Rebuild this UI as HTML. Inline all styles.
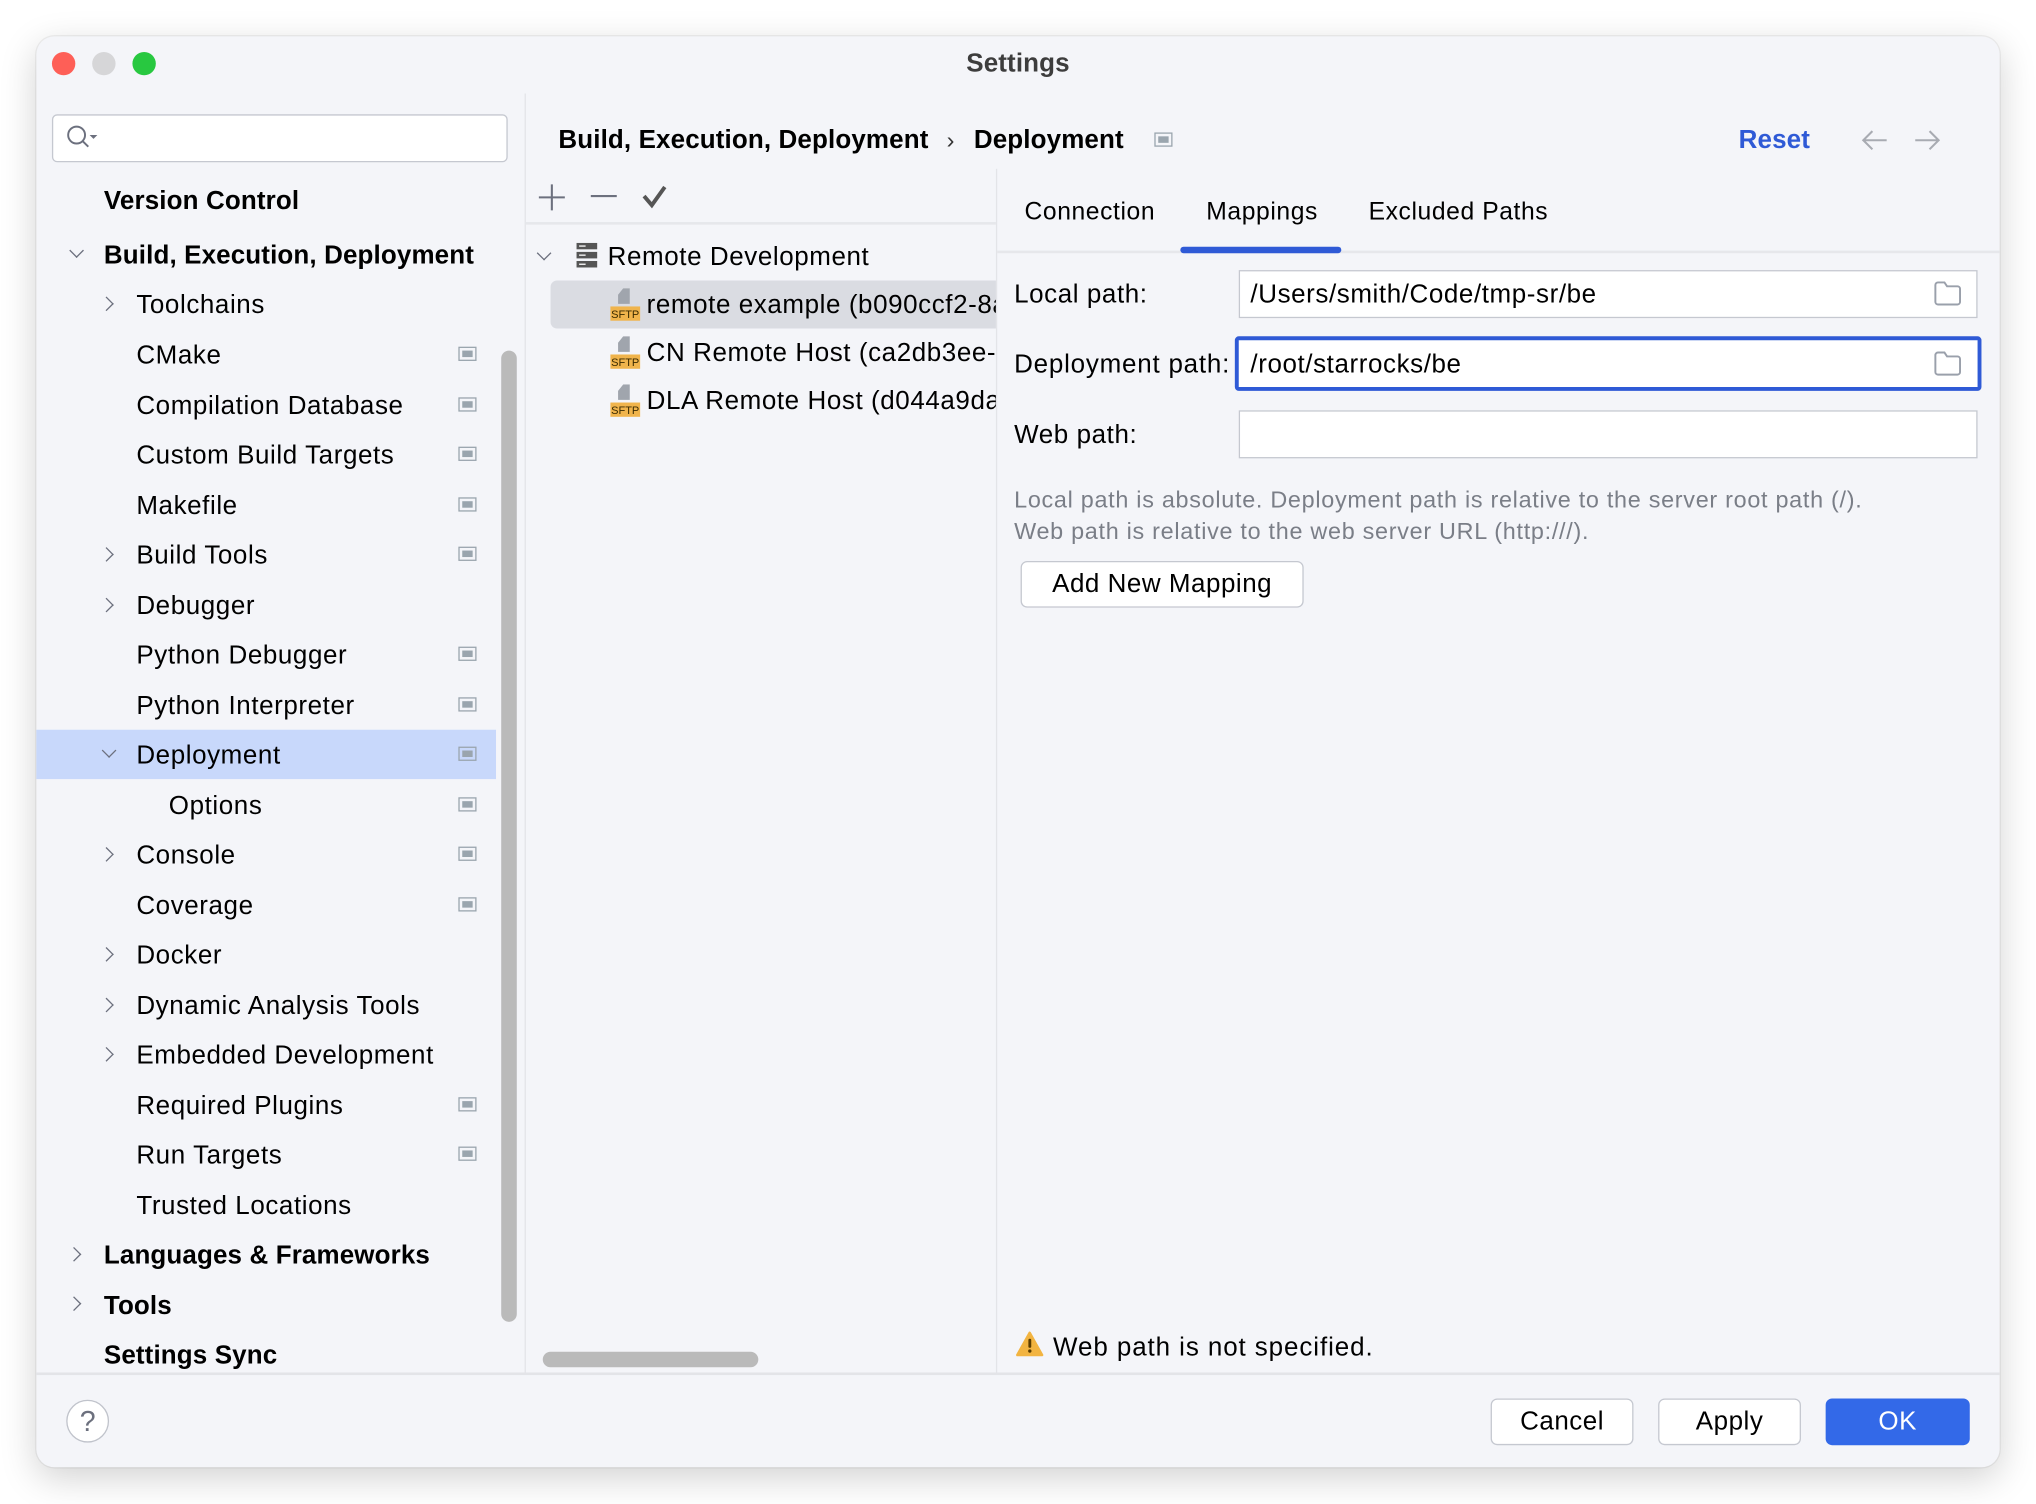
<!DOCTYPE html>
<html><head><meta charset="utf-8"><style>
html,body{margin:0;padding:0;background:#fff;width:2036px;height:1504px;overflow:hidden}
#s{position:absolute;left:0;top:0;width:1568px;height:1158px;transform:scale(1.29847);transform-origin:0 0;font-family:"Liberation Sans",sans-serif;color:#000}
.win{position:absolute;left:28px;top:28px;width:1512px;height:1102px;background:#f4f5f9;border-radius:14px;box-shadow:0 8px 28px rgba(0,0,0,.18),0 0 0 1px rgba(0,0,0,.06);overflow:hidden}
.t{position:absolute;white-space:nowrap;font-size:20px;line-height:24px;letter-spacing:0.45px;margin-top:1px}
.b{font-weight:bold;letter-spacing:0.1px}
.ic{position:absolute;width:12px;height:9px;border:1.5px solid #9aa5ae;background:#f4f5f9}
.ic::after{content:"";position:absolute;left:2px;top:2px;width:8px;height:5px;background:#9aa5ae}
.chev{position:absolute;width:7px;height:7px;border-right:1.5px solid #6c707e;border-bottom:1.5px solid #6c707e}
.r{transform:rotate(-45deg)}
.d{transform:rotate(45deg)}
.inp{position:absolute;background:#fff;border:1.5px solid #c5c8d0;box-sizing:border-box}
.btn{position:absolute;background:#fff;border:1.5px solid #c5c8d0;border-radius:5px;box-sizing:border-box;text-align:center;font-size:20px;line-height:35px;letter-spacing:0.4px}
.sftp{position:absolute;width:24px;height:26px}
</style></head><body><div id="s">
<div class="win"></div>
<div style="position:absolute;left:40px;top:40px;width:18px;height:18px;border-radius:50%;background:#fe5f57"></div>
<div style="position:absolute;left:71px;top:40px;width:18px;height:18px;border-radius:50%;background:#d6d6d8"></div>
<div style="position:absolute;left:102px;top:40px;width:18px;height:18px;border-radius:50%;background:#28c840"></div>
<div class="t b" style="left:0;width:1568px;text-align:center;top:36px;color:#3d3d3d;font-size:20px">Settings</div>

<div class="inp" style="left:40px;top:88px;width:351px;height:37px;border-radius:4px"></div>
<svg style="position:absolute;left:50px;top:95px" width="28" height="22" viewBox="0 0 28 22"><circle cx="9" cy="9" r="6.5" fill="none" stroke="#6c707e" stroke-width="1.5"/><line x1="13.5" y1="13.5" x2="18" y2="18" stroke="#6c707e" stroke-width="1.5"/><path d="M19 9h6l-3 3z" fill="#6c707e"/></svg>

<div class="t b" style="left:80px;top:142px">Version Control</div>
<div class="chev d" style="left:55px;top:189px"></div>
<div class="t b" style="left:80px;top:184px">Build, Execution, Deployment</div>
<div class="chev r" style="left:78px;top:230px"></div>
<div class="t" style="left:105px;top:222px">Toolchains</div>
<div class="t" style="left:105px;top:261px">CMake</div><div class="ic" style="left:353px;top:267px"></div>
<div class="t" style="left:105px;top:300px">Compilation Database</div><div class="ic" style="left:353px;top:306px"></div>
<div class="t" style="left:105px;top:338px">Custom Build Targets</div><div class="ic" style="left:353px;top:344px"></div>
<div class="t" style="left:105px;top:377px">Makefile</div><div class="ic" style="left:353px;top:383px"></div>
<div class="chev r" style="left:78px;top:423px"></div>
<div class="t" style="left:105px;top:415px">Build Tools</div><div class="ic" style="left:353px;top:421px"></div>
<div class="chev r" style="left:78px;top:462px"></div>
<div class="t" style="left:105px;top:454px">Debugger</div>
<div class="t" style="left:105px;top:492px">Python Debugger</div><div class="ic" style="left:353px;top:498px"></div>
<div class="t" style="left:105px;top:531px">Python Interpreter</div><div class="ic" style="left:353px;top:537px"></div>
<div style="position:absolute;left:28px;top:562px;width:354px;height:38px;background:#c8d8fb"></div>
<div class="chev d" style="left:80px;top:574px"></div>
<div class="t" style="left:105px;top:569px">Deployment</div><div class="ic" style="left:353px;top:575px;background:#c8d8fb"></div>
<div class="t" style="left:130px;top:608px">Options</div><div class="ic" style="left:353px;top:614px"></div>
<div class="chev r" style="left:78px;top:654px"></div>
<div class="t" style="left:105px;top:646px">Console</div><div class="ic" style="left:353px;top:652px"></div>
<div class="t" style="left:105px;top:685px">Coverage</div><div class="ic" style="left:353px;top:691px"></div>
<div class="chev r" style="left:78px;top:731px"></div>
<div class="t" style="left:105px;top:723px">Docker</div>
<div class="chev r" style="left:78px;top:770px"></div>
<div class="t" style="left:105px;top:762px">Dynamic Analysis Tools</div>
<div class="chev r" style="left:78px;top:808px"></div>
<div class="t" style="left:105px;top:800px">Embedded Development</div>
<div class="t" style="left:105px;top:839px">Required Plugins</div><div class="ic" style="left:353px;top:845px"></div>
<div class="t" style="left:105px;top:877px">Run Targets</div><div class="ic" style="left:353px;top:883px"></div>
<div class="t" style="left:105px;top:916px">Trusted Locations</div>
<div class="chev r" style="left:53px;top:962px"></div>
<div class="t b" style="left:80px;top:954px">Languages &amp; Frameworks</div>
<div class="chev r" style="left:53px;top:1000px"></div>
<div class="t b" style="left:80px;top:993px">Tools</div>
<div class="t b" style="left:80px;top:1031px">Settings Sync</div>
<div style="position:absolute;left:386px;top:270px;width:12px;height:748px;border-radius:6px;background:#bababa"></div>
<div style="position:absolute;left:404px;top:72px;width:1px;height:986px;background:#e3e4e8"></div>

<div class="t b" style="left:430px;top:95px">Build, Execution, Deployment</div>
<div class="t" style="left:729px;top:95px;color:#333;font-size:18px">›</div>
<div class="t b" style="left:750px;top:95px">Deployment</div>
<div class="ic" style="left:889px;top:102px"></div>
<div class="t b" style="left:1339px;top:95px;color:#2f5ad6">Reset</div>
<svg style="position:absolute;left:1433px;top:98px" width="64" height="20" viewBox="0 0 64 20"><path d="M2 10h18M9 3l-7 7 7 7" fill="none" stroke="#a8abb2" stroke-width="1.6"/><path d="M42 10h18M53 3l7 7-7 7" fill="none" stroke="#a8abb2" stroke-width="1.6"/></svg>

<svg style="position:absolute;left:413px;top:140px" width="110" height="24" viewBox="0 0 110 24"><path d="M12 2v20M2 12h20" stroke="#6c707e" stroke-width="1.6"/><path d="M42 11h20" stroke="#6c707e" stroke-width="1.6"/><path d="M83 11l6 7 10-14" fill="none" stroke="#555" stroke-width="3"/></svg>
<div style="position:absolute;left:405px;top:171px;width:362px;height:2px;background:#e6e7eb"></div>
<div class="chev d" style="left:415px;top:191px"></div>
<svg style="position:absolute;left:444px;top:187px" width="16" height="19" viewBox="0 0 16 19"><rect x="0" y="0" width="16" height="5" fill="#555"/><rect x="0" y="7" width="16" height="5" fill="#555"/><rect x="0" y="14" width="16" height="5" fill="#555"/><rect x="2" y="2" width="5" height="1" fill="#fff"/><rect x="2" y="9" width="5" height="1" fill="#fff"/><rect x="2" y="16" width="5" height="1" fill="#fff"/></svg>
<div class="t" style="left:468px;top:185px">Remote Development</div>
<div style="position:absolute;left:424px;top:216px;width:343px;height:37px;background:#dadce2;border-radius:5px 0 0 5px"></div>
<div style="position:absolute;left:405px;top:200px;width:362px;height:130px;overflow:hidden">
<div class="t" style="left:93px;top:22px">remote example (b090ccf2-8a1b</div>
<div class="t" style="left:93px;top:59px">CN Remote Host (ca2db3ee-1c2d</div>
<div class="t" style="left:93px;top:96px">DLA Remote Host (d044a9da-3e</div>
</div>
<svg class="sftp" style="left:470px;top:222px" viewBox="0 0 24 26"><path d="M10 0h5v12H6V5z" fill="#a0a5ad"/><rect x="0" y="14" width="23" height="11" fill="#f0b44c"/><text x="11.5" y="23" font-size="8.5" font-family="Liberation Sans" text-anchor="middle" fill="#3a2a00">SFTP</text></svg>
<svg class="sftp" style="left:470px;top:259px" viewBox="0 0 24 26"><path d="M10 0h5v12H6V5z" fill="#a0a5ad"/><rect x="0" y="14" width="23" height="11" fill="#f0b44c"/><text x="11.5" y="23" font-size="8.5" font-family="Liberation Sans" text-anchor="middle" fill="#3a2a00">SFTP</text></svg>
<svg class="sftp" style="left:470px;top:296px" viewBox="0 0 24 26"><path d="M10 0h5v12H6V5z" fill="#a0a5ad"/><rect x="0" y="14" width="23" height="11" fill="#f0b44c"/><text x="11.5" y="23" font-size="8.5" font-family="Liberation Sans" text-anchor="middle" fill="#3a2a00">SFTP</text></svg>
<div style="position:absolute;left:418px;top:1041px;width:166px;height:12px;border-radius:6px;background:#bababa"></div>
<div style="position:absolute;left:767px;top:130px;width:1px;height:928px;background:#e3e4e8"></div>

<div class="t" style="left:789px;top:151px;font-size:19px">Connection</div>
<div class="t" style="left:929px;top:151px;font-size:19px">Mappings</div>
<div class="t" style="left:1054px;top:151px;font-size:19px">Excluded Paths</div>
<div style="position:absolute;left:768px;top:193px;width:772px;height:2px;background:#e6e7eb"></div>
<div style="position:absolute;left:909px;top:190px;width:124px;height:5px;border-radius:3px;background:#2f5ad6"></div>

<div class="t" style="left:781px;top:214px">Local path:</div>
<div class="inp" style="left:954px;top:208px;width:569px;height:37px"></div>
<div class="t" style="left:963px;top:214px">/Users/smith/Code/tmp-sr/be</div>
<div class="t" style="left:781px;top:268px;letter-spacing:0.6px">Deployment path:</div>
<div class="inp" style="left:951px;top:259px;width:575px;height:42px;border:3px solid #2f5ad6;border-radius:3px"></div>
<div class="t" style="left:963px;top:268px">/root/starrocks/be</div>
<div class="t" style="left:781px;top:322px">Web path:</div>
<div class="inp" style="left:954px;top:316px;width:569px;height:37px"></div>
<svg style="position:absolute;left:1489px;top:216px" width="22" height="20" viewBox="0 0 22 20"><path d="M1.5 3.5a2 2 0 0 1 2-2h5l2 3h8a2 2 0 0 1 2 2v10a2 2 0 0 1-2 2h-15a2 2 0 0 1-2-2z" fill="none" stroke="#9aa0ab" stroke-width="1.5"/></svg>
<svg style="position:absolute;left:1489px;top:270px" width="22" height="20" viewBox="0 0 22 20"><path d="M1.5 3.5a2 2 0 0 1 2-2h5l2 3h8a2 2 0 0 1 2 2v10a2 2 0 0 1-2 2h-15a2 2 0 0 1-2-2z" fill="none" stroke="#9aa0ab" stroke-width="1.5"/></svg>
<div class="t" style="left:781px;top:372px;color:#7a7e87;font-size:18px;letter-spacing:0.55px">Local path is absolute. Deployment path is relative to the server root path (/).</div>
<div class="t" style="left:781px;top:396px;color:#7a7e87;font-size:18px;letter-spacing:0.55px">Web path is relative to the web server URL (http:///).</div>
<div class="btn" style="left:786px;top:432px;width:218px;height:36px">Add New Mapping</div>

<svg style="position:absolute;left:782px;top:1025px" width="22" height="20" viewBox="0 0 22 20"><path d="M11 1.5L20.5 18.5H1.5z" fill="#f2b441" stroke="#f2b441" stroke-width="2" stroke-linejoin="round"/><rect x="10" y="6" width="2.2" height="7" rx="1" fill="#5a3c00"/><circle cx="11.1" cy="15.5" r="1.3" fill="#5a3c00"/></svg>
<div class="t" style="left:811px;top:1025px;letter-spacing:0.7px">Web path is not specified.</div>

<div style="position:absolute;left:28px;top:1057px;width:1512px;height:2px;background:#e3e4e8"></div>
<div style="position:absolute;left:51px;top:1078px;width:31px;height:31px;border-radius:50%;border:1.5px solid #c0c3cb;background:#fff;text-align:center;font-size:22px;line-height:31px;color:#6c707e">?</div>
<div class="btn" style="left:1148px;top:1077px;width:110px;height:36px">Cancel</div>
<div class="btn" style="left:1277px;top:1077px;width:110px;height:36px">Apply</div>
<div class="btn" style="left:1406px;top:1077px;width:111px;height:36px;background:#3369e8;border-color:#3369e8;color:#fff">OK</div>
</div></body></html>
